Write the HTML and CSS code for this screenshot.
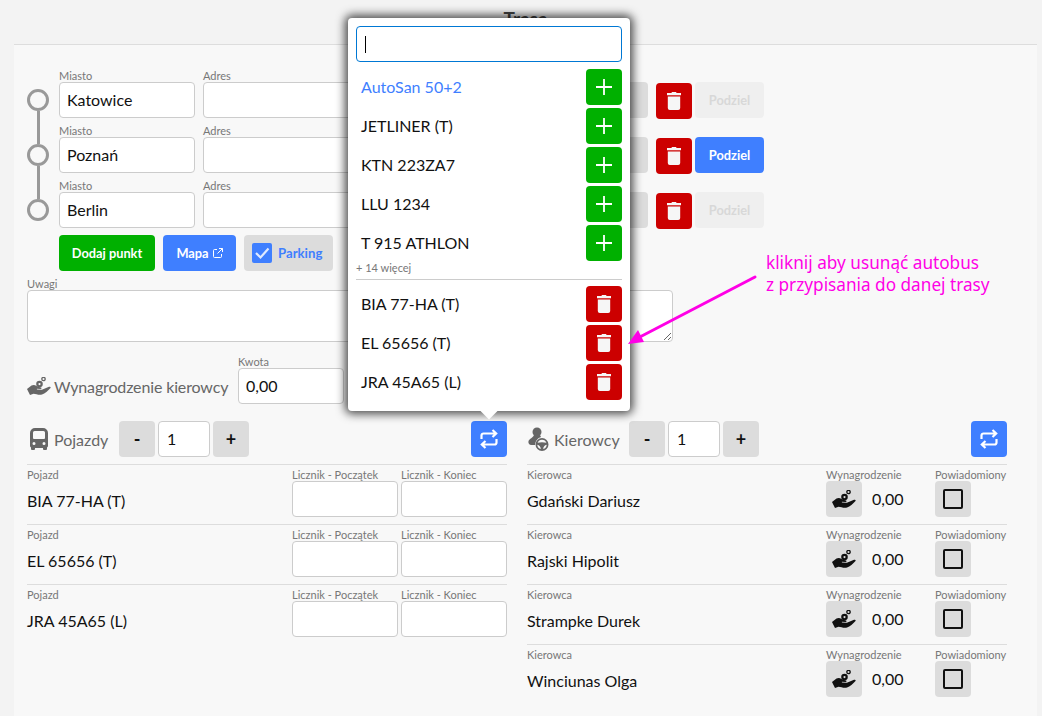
FILE: index.html
```html
<!DOCTYPE html>
<html lang="en">
<head>
  <meta charset="UTF-8">
  <title>Trasa</title>
  <link rel="stylesheet" href="styles.css">
</head>
<body>
  <svg class="defs" width="0" height="0">
    <symbol id="i-trash" viewBox="0 0 14 18">
      <path d="M5 0h4l.6 1H14v2.200H0V1h4.400zM.8 4.500h12.400V16a2 2 0 0 1-2 2H2.800a2 2 0 0 1-2-2z"/>
    </symbol>
    <symbol id="i-plus" viewBox="0 0 16 16">
      <path d="M7.100 0h1.800v7.100H16v1.800H8.900V16H7.100V8.900H0V7.100h7.100z"/>
    </symbol>
    <symbol id="i-swap" viewBox="0 0 18 20">
      <path d="M1.500 10V6.500a2 2 0 0 1 2-2H16M12.500 1L16.200 4.500L12.500 8M16.500 10v3.500a2 2 0 0 1-2 2H2M5.500 12L1.800 15.500L5.500 19" fill="none" stroke="currentColor" stroke-width="2.200"/>
    </symbol>
    <symbol id="i-hand" viewBox="0 0 24 18">
      <circle cx="16.500" cy="2" r="1.700" fill="none" stroke="currentColor" stroke-width="1.300"/>
      <path fill-rule="evenodd" d="M12.500 3.800a3.300 3.300 0 1 1 0 6.600a3.300 3.300 0 0 1 0-6.600zm0 2.200a1.100 1.100 0 1 0 0 2.200a1.100 1.100 0 0 0 0-2.200z"/>
      <path d="M0 12l4.500-3.500c2-1 3.500-.5 5 .6c1.500 1 3.500 1.100 4.500 1.400c1 .5 .6 1.700-.6 1.600l-3.500-.3v.6l5 .3L22 9.800c1.200-.4 2 .6 1.500 1.300c-2.500 2.800-5.500 5.500-8.500 6.500c-3.500 .6-6-.6-8.500-.9L3 18z"/>
    </symbol>
    <symbol id="i-bus" viewBox="0 0 18 22">
      <path fill-rule="evenodd" d="M5 0h8a5 5 0 0 1 5 5v13a1.500 1.500 0 0 1-1 1.400V21a1 1 0 0 1-1 1h-2a1 1 0 0 1-1-1v-1H5v1a1 1 0 0 1-1 1H2a1 1 0 0 1-1-1v-1.600A1.500 1.500 0 0 1 0 18V5a5 5 0 0 1 5-5zM4.500 3A1.500 1.500 0 0 0 3 4.500V10a1 1 0 0 0 1 1h10a1 1 0 0 0 1-1V4.500A1.500 1.500 0 0 0 13.500 3zM4 14a1.500 1.500 0 1 0 0 3a1.500 1.500 0 0 0 0-3zm10 0a1.500 1.500 0 1 0 0 3a1.500 1.500 0 0 0 0-3z"/>
    </symbol>
    <symbol id="i-driver" viewBox="0 0 21 24">
      <circle cx="9" cy="5" r="4.500"/>
      <path d="M6 8h6l1 2c-3 1-5.500 3.500-6 8H3.500C1 18 0 16 .5 14C1.500 11.500 5 11 6 8z"/>
      <path fill-rule="evenodd" d="M14 11a6.500 6.500 0 1 1 0 13a6.500 6.500 0 0 1 0-13zm0 1.800a4.700 4.700 0 0 0-4.400 3c2.900-.8 5.900-.8 8.800 0a4.700 4.700 0 0 0-4.400-3zm-4.700 5a4.700 4.700 0 0 0 3.500 4.300c0-2-1.400-3.900-3.500-4.300zm9.400 0c-2.100 .4-3.500 2.300-3.500 4.300a4.700 4.700 0 0 0 3.500-4.300z"/>
    </symbol>
  </svg>

  <div class="page">
    <h2 class="title">Trasa</h2>
    <div class="panel">
      <div class="stops">
        <div class="stop">
          <span class="marker"></span>
          <div class="field city"><label>Miasto</label><input type="text" value="Katowice"></div>
          <div class="field address"><label>Adres</label><input type="text"></div>
          <button class="btn gray square"></button>
          <button class="btn red square drop"><svg class="ico-trash"><use href="#i-trash"/></svg></button>
          <button class="btn share off">Podziel</button>
        </div>
        <div class="stop">
          <span class="marker line"></span>
          <div class="field city"><label>Miasto</label><input type="text" value="Poznań"></div>
          <div class="field address"><label>Adres</label><input type="text"></div>
          <button class="btn gray square"></button>
          <button class="btn red square drop"><svg class="ico-trash"><use href="#i-trash"/></svg></button>
          <button class="btn share blue">Podziel</button>
        </div>
        <div class="stop">
          <span class="marker line"></span>
          <div class="field city"><label>Miasto</label><input type="text" value="Berlin"></div>
          <div class="field address"><label>Adres</label><input type="text"></div>
          <button class="btn gray square"></button>
          <button class="btn red square drop"><svg class="ico-trash"><use href="#i-trash"/></svg></button>
          <button class="btn share off">Podziel</button>
        </div>
      </div>

      <div class="actions">
        <button class="btn green add-point">Dodaj punkt</button>
        <button class="btn blue map">Mapa
          <svg class="ico-ext" viewBox="0 0 10 10"><path d="M4 1.500H1.500a1 1 0 0 0-1 1v6a1 1 0 0 0 1 1h6a1 1 0 0 0 1-1V6M6 .5h3.500V4M9.500 .5L4.500 5.500" fill="none" stroke="currentColor"/></svg>
        </button>
        <button class="btn gray parking">
          <span class="check-on"><svg viewBox="0 0 20 20"><path d="M4 10l4.500 4.500L16.500 5.500" fill="none" stroke="#dfe9ff" stroke-width="2.200"/></svg></span>
          Parking
        </button>
      </div>

      <div class="field notes">
        <label>Uwagi</label>
        <textarea></textarea>
      </div>

      <div class="wage">
        <span class="section-name wage-name"><svg class="ico-hand"><use href="#i-hand"/></svg>Wynagrodzenie kierowcy</span>
        <div class="field amount"><label>Kwota</label><input type="text" value="0,00"></div>
      </div>

      <div class="columns">
        <div class="col">
          <div class="col-head">
            <span class="section-name vehicles"><svg class="ico-bus"><use href="#i-bus"/></svg>Pojazdy</span>
            <button class="btn gray square pm">-</button>
            <input class="count" type="text" value="1">
            <button class="btn gray square pm">+</button>
            <button class="btn blue square swap"><svg class="ico-swap"><use href="#i-swap"/></svg></button>
          </div>
          <div class="row vehicle">
            <div class="who"><label>Pojazd</label><div class="name">BIA 77-HA (T)</div></div>
            <div class="field"><label>Licznik - Początek</label><input type="text"></div>
            <div class="field"><label>Licznik - Koniec</label><input type="text"></div>
          </div>
          <div class="row vehicle">
            <div class="who"><label>Pojazd</label><div class="name">EL 65656 (T)</div></div>
            <div class="field"><label>Licznik - Początek</label><input type="text"></div>
            <div class="field"><label>Licznik - Koniec</label><input type="text"></div>
          </div>
          <div class="row vehicle">
            <div class="who"><label>Pojazd</label><div class="name">JRA 45A65 (L)</div></div>
            <div class="field"><label>Licznik - Początek</label><input type="text"></div>
            <div class="field"><label>Licznik - Koniec</label><input type="text"></div>
          </div>
        </div>

        <div class="col">
          <div class="col-head">
            <span class="section-name drivers"><svg class="ico-driver"><use href="#i-driver"/></svg>Kierowcy</span>
            <button class="btn gray square pm">-</button>
            <input class="count" type="text" value="1">
            <button class="btn gray square pm">+</button>
            <button class="btn blue square swap"><svg class="ico-swap"><use href="#i-swap"/></svg></button>
          </div>
          <div class="row driver">
            <div class="who"><label>Kierowca</label><div class="name">Gdański Dariusz</div></div>
            <div class="field"><label>Wynagrodzenie</label><div class="pay"><button class="btn gray square"><svg class="ico-hand dark"><use href="#i-hand"/></svg></button><span>0,00</span></div></div>
            <div class="field"><label>Powiadomiony</label><button class="btn gray square"><span class="check-off"></span></button></div>
          </div>
          <div class="row driver">
            <div class="who"><label>Kierowca</label><div class="name">Rajski Hipolit</div></div>
            <div class="field"><label>Wynagrodzenie</label><div class="pay"><button class="btn gray square"><svg class="ico-hand dark"><use href="#i-hand"/></svg></button><span>0,00</span></div></div>
            <div class="field"><label>Powiadomiony</label><button class="btn gray square"><span class="check-off"></span></button></div>
          </div>
          <div class="row driver">
            <div class="who"><label>Kierowca</label><div class="name">Strampke Durek</div></div>
            <div class="field"><label>Wynagrodzenie</label><div class="pay"><button class="btn gray square"><svg class="ico-hand dark"><use href="#i-hand"/></svg></button><span>0,00</span></div></div>
            <div class="field"><label>Powiadomiony</label><button class="btn gray square"><span class="check-off"></span></button></div>
          </div>
          <div class="row driver">
            <div class="who"><label>Kierowca</label><div class="name">Winciunas Olga</div></div>
            <div class="field"><label>Wynagrodzenie</label><div class="pay"><button class="btn gray square"><svg class="ico-hand dark"><use href="#i-hand"/></svg></button><span>0,00</span></div></div>
            <div class="field"><label>Powiadomiony</label><button class="btn gray square"><span class="check-off"></span></button></div>
          </div>
        </div>
      </div>
    </div>
  </div>

  <!-- bus picker popover -->
  <div class="popover">
    <div class="search"><span class="caret"></span></div>
    <ul class="pick-list free">
      <li class="first"><span>AutoSan 50+2</span><button class="btn green square"><svg class="ico-plus"><use href="#i-plus"/></svg></button></li>
      <li><span>JETLINER (T)</span><button class="btn green square"><svg class="ico-plus"><use href="#i-plus"/></svg></button></li>
      <li><span>KTN 223ZA7</span><button class="btn green square"><svg class="ico-plus"><use href="#i-plus"/></svg></button></li>
      <li><span>LLU 1234</span><button class="btn green square"><svg class="ico-plus"><use href="#i-plus"/></svg></button></li>
      <li><span>T 915 ATHLON</span><button class="btn green square"><svg class="ico-plus"><use href="#i-plus"/></svg></button></li>
    </ul>
    <div class="more">+ 14 więcej</div>
    <ul class="pick-list taken">
      <li><span>BIA 77-HA (T)</span><button class="btn red square"><svg class="ico-trash"><use href="#i-trash"/></svg></button></li>
      <li><span>EL 65656 (T)</span><button class="btn red square"><svg class="ico-trash"><use href="#i-trash"/></svg></button></li>
      <li><span>JRA 45A65 (L)</span><button class="btn red square"><svg class="ico-trash"><use href="#i-trash"/></svg></button></li>
    </ul>
  </div>

  <!-- annotation drawn over the screenshot -->
  <div class="note-text">kliknij aby usunąć autobus<br>z przypisania do danej trasy</div>
  <svg class="note-arrow" width="140" height="80" viewBox="0 0 140 80">
    <path d="M131 3L12 65" stroke="#ff00e6" stroke-width="3" stroke-linecap="round" fill="none"/>
    <path d="M4 70L14 56L20 68z" fill="#ff00e6"/>
  </svg>
</body>
</html>
```

FILE: styles.css
```css
* {
  box-sizing: border-box;
}
body {
  margin: 0;
  background-color: #f3f3f3;
  font-family: Lato, sans-serif;
  color: #111;
  height: 716px;
  overflow: hidden;
}
.defs {
  position: absolute;
}
.page {
  margin: 0 5px 0 14px;
}
.title {
  margin: 0;
  height: 45px;
  padding-top: 9px;
  text-align: center;
  font-size: 19px;
  line-height: 20px;
  font-weight: 700;
  color: #444;
  border-bottom: 1px solid #ddd;
}
.panel {
  background-color: #f8f8f8;
  padding: 25px 30px 0 13px;
  height: 671px;
}
label {
  display: block;
  height: 12px;
  font-size: 11px;
  line-height: 12px;
  color: #777;
  white-space: nowrap;
}
input, textarea {
  display: block;
  width: 100%;
  height: 36px;
  padding: 0 7px 2px;
  background-color: #fff;
  border: 1px solid #ccc;
  border-radius: 4px;
  font-family: Lato, sans-serif;
  font-size: 16px;
  color: #111;
}
.btn {
  height: 36px;
  padding: 0;
  border: none;
  border-radius: 4px;
  font-family: Lato, sans-serif;
  font-size: 12.8px;
  font-weight: 700;
  display: flex;
  align-items: center;
  justify-content: center;
  flex: none;
}
.square {
  width: 36px;
}
.green {
  background-color: #00b000;
  color: #fff;
}
.red {
  background-color: #cc0000;
  color: #f6f6f6;
}
.blue {
  background-color: #3f7fff;
  color: #fff;
}
.gray {
  background-color: #dcdcdc;
  color: #111;
}
.off {
  background-color: #efefef;
  color: #d8d8d8;
}

/* route */
.stop {
  display: flex;
  align-items: flex-end;
  width: 737px;
  height: 48px;
  margin-bottom: 7px;
}
.marker {
  position: relative;
  flex: none;
  width: 22px;
  height: 22px;
  margin: 0 10px 7px 0;
  border: 3px solid #999;
  border-radius: 50%;
}
.marker.line::before {
  content: "";
  position: absolute;
  left: 7px;
  top: -36px;
  width: 3px;
  height: 33px;
  background-color: #999;
}
.city {
  width: 136px;
  margin-right: 8px;
}
.address {
  flex: 1;
  margin-right: 8px;
}
.stop .gray {
  margin-right: 8px;
}
.drop {
  margin: 0 3px -1px 0;
}
.share {
  width: 69px;
}
.ico-trash {
  width: 14px;
  height: 18px;
  fill: currentColor;
}
.actions {
  display: flex;
  padding-left: 32px;
}
.add-point {
  width: 96px;
  margin-right: 8px;
}
.map {
  width: 73px;
  margin-right: 8px;
}
.ico-ext {
  width: 10px;
  height: 10px;
  margin-left: 4px;
}
.parking {
  width: 89px;
  color: #3f7fff;
  justify-content: flex-start;
  padding-left: 8px;
  font-size: 13.2px;
}
.check-on {
  width: 20px;
  height: 20px;
  margin-right: 6px;
  background-color: #3f7fff;
  border-radius: 2px;
  display: block;
}
.check-on svg {
  display: block;
}
.notes {
  margin-top: 7px;
  width: 646px;
}
.notes textarea {
  height: 52px;
  resize: both;
}
.wage {
  display: flex;
  align-items: flex-end;
  margin-top: 14px;
}
.section-name {
  display: flex;
  align-items: center;
  font-size: 16px;
  color: #666;
  white-space: nowrap;
}
.wage-name {
  width: 211px;
  height: 36px;
  letter-spacing: -0.14px;
}
.ico-hand {
  width: 24px;
  height: 18px;
  margin-right: 3px;
  fill: #666;
  color: #666;
}
.ico-hand.dark {
  margin: 0;
  fill: #111;
  color: #111;
}
.amount {
  width: 106px;
}

/* vehicles and drivers */
.columns {
  display: grid;
  grid-template-columns: 480px 480px;
  gap: 20px;
  margin-top: 17px;
}
.col-head {
  display: flex;
  align-items: center;
  height: 36px;
  margin-bottom: 7px;
}
.vehicles {
  width: 92px;
}
.drivers {
  width: 102px;
}
.ico-bus {
  width: 18px;
  height: 22px;
  margin: 0 6px 0 3px;
  fill: #666;
}
.ico-driver {
  width: 21px;
  height: 24px;
  margin: 0 5px 0 1px;
  fill: #666;
}
.pm {
  font-size: 18px;
}
.count {
  width: 52px;
  margin: 0 3px;
  padding: 0 8px 2px;
}
.swap {
  margin-left: auto;
}
.ico-swap {
  width: 18px;
  height: 20px;
}
.row {
  display: grid;
  height: 60px;
  padding-top: 4px;
  border-top: 1px solid #ddd;
}
.vehicle {
  grid-template-columns: 1fr 106px 106px;
  column-gap: 3px;
}
.driver {
  grid-template-columns: 1fr 109px 72px;
}
.name {
  margin-top: 10px;
  font-size: 16px;
  line-height: 20px;
}
.pay {
  display: flex;
  align-items: center;
  font-size: 16px;
}
.pay span {
  margin-left: 10px;
  padding-bottom: 2px;
}
.check-off {
  display: block;
  width: 20px;
  height: 20px;
  border: 2.5px solid #111;
  border-radius: 2px;
}

/* popover */
.popover {
  position: absolute;
  left: 348px;
  top: 18px;
  width: 282px;
  height: 393px;
  padding: 8px;
  background-color: #fff;
  border-radius: 4px;
  box-shadow: 0 0 10px 3px rgba(0,0,0,0.7);
}
.popover::after {
  content: "";
  position: absolute;
  left: 135px;
  top: 387px;
  width: 12px;
  height: 12px;
  background-color: #fff;
  transform: rotate(45deg);
}
.search {
  display: flex;
  align-items: center;
  height: 36px;
  padding-left: 8px;
  border: 1px solid #0078d4;
  border-radius: 4px;
}
.caret {
  width: 1px;
  height: 17px;
  background-color: #000;
}
.pick-list {
  list-style: none;
  margin: 0;
  padding: 0;
}
.pick-list li {
  display: flex;
  align-items: center;
  justify-content: space-between;
  height: 36px;
  margin-top: 3px;
  padding-left: 5px;
  font-size: 16px;
}
.pick-list span {
  padding-bottom: 2px;
}
.free {
  padding-top: 4px;
}
.first span {
  color: #3f7fff;
}
.ico-plus {
  width: 16px;
  height: 16px;
  fill: #fff;
}
.more {
  height: 19px;
  padding-top: 1px;
  font-size: 11px;
  line-height: 12px;
  color: #777;
  border-bottom: 1px solid #ccc;
}
.taken {
  padding-top: 3px;
}

/* annotation */
.note-text {
  position: absolute;
  left: 766px;
  top: 252px;
  font-family: "Noto Sans", sans-serif;
  font-size: 17.2px;
  line-height: 22px;
  color: #ff00e6;
  white-space: nowrap;
}
.note-arrow {
  position: absolute;
  left: 624px;
  top: 274px;
}
```
